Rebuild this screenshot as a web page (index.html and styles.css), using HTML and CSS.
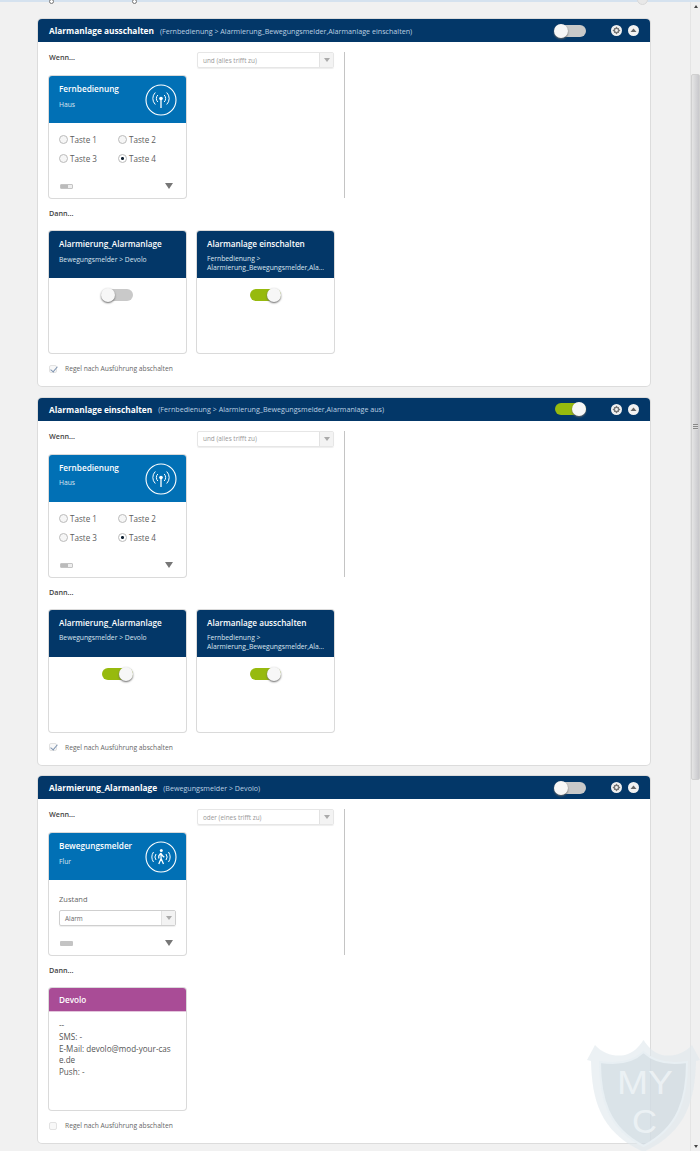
FILE: index.html
```html
<!DOCTYPE html>
<html lang="de">
<head>
  <meta charset="UTF-8">
  <title>Regeln</title>
  <link rel="stylesheet" href="styles.css">
</head>
<body>

<svg class="defs" width="0" height="0">
  <symbol id="i-remote" viewBox="0 0 32 32">
    <circle cx="16" cy="16" r="15" fill="none" stroke="#fff" stroke-width="1.1"/>
    <circle cx="16" cy="14.500" r="1.800" fill="#fff"/>
    <path d="M16 15v9" stroke="#fff" stroke-width="1.300"/>
    <path d="M12.800 18a5 5 0 0 1 0-7M19.200 11a5 5 0 0 1 0 7M10.300 20.500a8.500 8.500 0 0 1 0-12M21.700 8.500a8.500 8.500 0 0 1 0 12" fill="none" stroke="#fff" stroke-width="1"/>
  </symbol>
  <symbol id="i-motion" viewBox="0 0 32 32">
    <circle cx="16" cy="16" r="15" fill="none" stroke="#fff" stroke-width="1.1"/>
    <circle cx="16.300" cy="9.500" r="1.500" fill="#fff"/>
    <path d="M15.800 12l-2 3v2.500M15.800 12l2 3 1.500 1.200M16 12.500l.1 5-2.300 5.500M16.100 17.500l2.400 5.500" fill="none" stroke="#fff" stroke-width="1.300"/>
    <path d="M11 13a5 5 0 0 0 0 6M8.500 11a9 9 0 0 0 0 10M21 13a5 5 0 0 1 0 6M23.500 11a9 9 0 0 1 0 10" fill="none" stroke="#fff" stroke-width="1"/>
  </symbol>
  <symbol id="i-gear" viewBox="0 0 11 11">
    <circle cx="5.500" cy="5.500" r="5.500" fill="#f2f2f2"/>
    <circle cx="5.500" cy="5.500" r="2.200" fill="none" stroke="#777" stroke-width="1.500"/>
    <path d="M5.500 1.800v1.200M5.500 8v1.200M1.800 5.500H3M8 5.500h1.200M2.900 2.900l.8.8M7.300 7.300l.8.8M8.100 2.900l-.8.8M3.700 7.300l-.8.8" stroke="#777" stroke-width="1"/>
  </symbol>
  <symbol id="i-up" viewBox="0 0 11 11">
    <circle cx="5.500" cy="5.500" r="5.500" fill="#f2f2f2"/>
    <path d="M5.500 3.500L8.500 7h-6z" fill="#666"/>
  </symbol>
</svg>

<div class="topstrip">
  <i class="cut-ring ring-a"></i>
  <i class="cut-ring ring-b"></i>
  <i class="cut-ring ring-c"></i>
</div>

<main class="rules">

  <section class="rule">
    <header class="rule-head">
      <h2>Alarmanlage ausschalten</h2>
      <span class="rule-path">(Fernbedienung &gt; Alarmierung_Bewegungsmelder,Alarmanlage einschalten)</span>
      <span class="switch"></span>
      <svg class="head-btn gear"><use href="#i-gear"/></svg>
      <svg class="head-btn"><use href="#i-up"/></svg>
    </header>
    <div class="rule-body">
      <div class="when-row">
        <div class="when-col">
          <div class="label">Wenn...</div>
          <div class="card">
            <div class="card-head blue">
              <div class="card-text">
                <h3>Fernbedienung</h3>
                <p>Haus</p>
              </div>
              <svg class="card-icon"><use href="#i-remote"/></svg>
            </div>
            <div class="card-main radios">
              <span class="radio"><i></i>Taste 1</span>
              <span class="radio"><i></i>Taste 2</span>
              <span class="radio"><i></i>Taste 3</span>
              <span class="radio on"><i></i>Taste 4</span>
            </div>
            <div class="card-foot"><span class="battery low"></span><span class="more"></span></div>
          </div>
        </div>
        <div class="logic-col">
          <div class="select"><span>und (alles trifft zu)</span><b></b></div>
        </div>
      </div>
      <div class="label then">Dann...</div>
      <div class="actions">
        <div class="card">
          <div class="card-head navy">
            <div class="card-text">
              <h3>Alarmierung_Alarmanlage</h3>
              <p>Bewegungsmelder &gt; Devolo</p>
            </div>
          </div>
          <div class="card-switch"><span class="switch"></span></div>
        </div>
        <div class="card">
          <div class="card-head navy">
            <div class="card-text">
              <h3>Alarmanlage einschalten</h3>
              <p class="small">Fernbedienung &gt;<br>Alarmierung_Bewegungsmelder,Ala...</p>
            </div>
          </div>
          <div class="card-switch"><span class="switch on"></span></div>
        </div>
      </div>
      <div class="check on"><i></i>Regel nach Ausführung abschalten</div>
    </div>
  </section>

  <section class="rule">
    <header class="rule-head">
      <h2>Alarmanlage einschalten</h2>
      <span class="rule-path">(Fernbedienung &gt; Alarmierung_Bewegungsmelder,Alarmanlage aus)</span>
      <span class="switch on"></span>
      <svg class="head-btn gear"><use href="#i-gear"/></svg>
      <svg class="head-btn"><use href="#i-up"/></svg>
    </header>
    <div class="rule-body">
      <div class="when-row">
        <div class="when-col">
          <div class="label">Wenn...</div>
          <div class="card">
            <div class="card-head blue">
              <div class="card-text">
                <h3>Fernbedienung</h3>
                <p>Haus</p>
              </div>
              <svg class="card-icon"><use href="#i-remote"/></svg>
            </div>
            <div class="card-main radios">
              <span class="radio"><i></i>Taste 1</span>
              <span class="radio"><i></i>Taste 2</span>
              <span class="radio"><i></i>Taste 3</span>
              <span class="radio on"><i></i>Taste 4</span>
            </div>
            <div class="card-foot"><span class="battery low"></span><span class="more"></span></div>
          </div>
        </div>
        <div class="logic-col">
          <div class="select"><span>und (alles trifft zu)</span><b></b></div>
        </div>
      </div>
      <div class="label then">Dann...</div>
      <div class="actions">
        <div class="card">
          <div class="card-head navy">
            <div class="card-text">
              <h3>Alarmierung_Alarmanlage</h3>
              <p>Bewegungsmelder &gt; Devolo</p>
            </div>
          </div>
          <div class="card-switch"><span class="switch on"></span></div>
        </div>
        <div class="card">
          <div class="card-head navy">
            <div class="card-text">
              <h3>Alarmanlage ausschalten</h3>
              <p class="small">Fernbedienung &gt;<br>Alarmierung_Bewegungsmelder,Ala...</p>
            </div>
          </div>
          <div class="card-switch"><span class="switch on"></span></div>
        </div>
      </div>
      <div class="check on"><i></i>Regel nach Ausführung abschalten</div>
    </div>
  </section>

  <section class="rule">
    <header class="rule-head">
      <h2>Alarmierung_Alarmanlage</h2>
      <span class="rule-path">(Bewegungsmelder &gt; Devolo)</span>
      <span class="switch"></span>
      <svg class="head-btn gear"><use href="#i-gear"/></svg>
      <svg class="head-btn"><use href="#i-up"/></svg>
    </header>
    <div class="rule-body">
      <div class="when-row">
        <div class="when-col">
          <div class="label">Wenn...</div>
          <div class="card">
            <div class="card-head blue">
              <div class="card-text">
                <h3>Bewegungsmelder</h3>
                <p>Flur</p>
              </div>
              <svg class="card-icon"><use href="#i-motion"/></svg>
            </div>
            <div class="card-main state">
              <div class="state-label">Zustand</div>
              <div class="select in-card"><span>Alarm</span><b></b></div>
            </div>
            <div class="card-foot"><span class="battery"></span><span class="more"></span></div>
          </div>
        </div>
        <div class="logic-col">
          <div class="select"><span>oder (eines trifft zu)</span><b></b></div>
        </div>
      </div>
      <div class="label then">Dann...</div>
      <div class="actions">
        <div class="card">
          <div class="card-head purple"><h3>Devolo</h3></div>
          <div class="contact">
            --<br>
            SMS: -<br>
            E-Mail: devolo@mod-your-case.de<br>
            Push: -
          </div>
        </div>
      </div>
      <div class="check"><i></i>Regel nach Ausführung abschalten</div>
    </div>
  </section>

</main>

<aside class="scrollbar">
  <span class="arrow"></span>
  <div class="thumb"><i></i></div>
  <span class="arrow down"></span>
</aside>

<svg class="watermark" viewBox="0 0 113 111">
  <path d="M8 5C16 14 28 17 38 15 46 13 52 7 56.500 0 61 7 67 13 75 15 85 17 97 14 105 5L113 20 109 21C108 60 100 92 56.500 112 13 92 5 60 4 21L0 20z" fill="#dfe8ed" fill-opacity=".6"/>
  <path d="M13 22C26 24 44 24 56.500 12 69 24 87 24 100 22 100 58 92 88 56.500 106 21 88 13 58 13 22z" fill="#ccd7df" fill-opacity=".55" stroke="#e8eff3" stroke-width="2"/>
  <text class="mark" x="30" y="54" textLength="56" lengthAdjust="spacingAndGlyphs">MY</text>
  <text class="mark" x="45" y="93" textLength="25" lengthAdjust="spacingAndGlyphs">C</text>
</svg>

</body>
</html>
```

FILE: styles.css
```css
* {
  box-sizing: border-box;
}
html, body {
  margin: 0;
  height: 1151px;
  overflow: hidden;
}
body {
  background: #f1f1f1;
  font-family: "Open Sans", sans-serif;
  color: #555;
  position: relative;
}
.defs {
  position: absolute;
}

/* top of the window, the rule above is scrolled away */
.topstrip {
  height: 19px;
  border-top: 2px solid #d5e2ef;
  position: relative;
}
.cut-ring {
  position: absolute;
  top: -3px;
  width: 5px;
  height: 5px;
  border: 1px solid #777;
  border-radius: 50%;
  background: #fff;
}
.ring-a { left: 49px; }
.ring-b { left: 132px; }
.ring-c {
  left: 637px;
  top: -8px;
  width: 11px;
  height: 11px;
  border-color: #d8d8d8;
  background: #e8e8e8;
}

.rules {
  width: 612px;
  margin-left: 38px;
  display: flex;
  flex-direction: column;
  gap: 11.500px;
}
.rule {
  height: 367px;
  display: flex;
  flex-direction: column;
  background: #fff;
  border-radius: 4px;
  box-shadow: 0 0 0 1px #dcdcdc;
}
.rule-head {
  height: 23px;
  flex: none;
  display: flex;
  align-items: center;
  padding: 0 11px;
  background: #033768;
  border-radius: 4px 4px 0 0;
  color: #fff;
}
.rule-head h2 {
  margin: 0;
  font-size: 8.300px;
  font-weight: 700;
  white-space: nowrap;
}
.rule-path {
  margin-left: 6px;
  font-size: 7.150px;
  color: #bcd0e2;
  white-space: nowrap;
}
.rule-head .switch {
  margin-left: auto;
}
.head-btn {
  width: 11px;
  height: 11px;
  margin-left: 6px;
}
.head-btn.gear {
  margin-left: 25px;
}

.rule-body {
  flex: 1;
  padding: 10px 10px 0 11px;
}
.when-row {
  display: flex;
  height: 146px;
}
.when-col {
  width: 137px;
  display: flex;
  flex-direction: column;
}
.logic-col {
  width: 148px;
  margin-left: 11px;
  padding-right: 10px;
  border-right: 1px solid #c4c4c4;
}
.label {
  height: 24px;
  font-size: 7.200px;
  font-weight: 600;
  color: #444;
}
.label.then {
  height: 23px;
  margin-top: 10px;
}

.select {
  height: 16px;
  display: flex;
  align-items: center;
  border: 1px solid #e6e6e6;
  border-radius: 2px;
  font-size: 6.400px;
  color: #999;
  box-shadow: 0 1px 1px #eee;
}
.select span {
  flex: 1;
  padding-left: 5px;
}
.select b {
  width: 14px;
  height: 100%;
  flex: none;
  position: relative;
  border-left: 1px solid #e2e2e2;
  background: #f3f3f3;
}
.select b::after {
  content: "";
  position: absolute;
  left: 4px;
  top: 5px;
  border: 3px solid transparent;
  border-top: 4px solid #aaa;
  border-bottom: 0;
}
.select.in-card {
  color: #666;
  border-color: #cfcfcf;
}

.card {
  width: 137px;
  height: 122px;
  flex: none;
  display: flex;
  flex-direction: column;
  background: #fff;
  border-radius: 3px;
  box-shadow: 0 0 0 1px #dadada;
}
.card-head {
  height: 47px;
  flex: none;
  display: flex;
  justify-content: space-between;
  padding: 7px 10px;
  border-radius: 3px 3px 0 0;
  color: #fff;
}
.card-head.blue { background: #0170b5; }
.card-head.navy { background: #033768; }
.card-head.purple {
  height: 24px;
  align-items: center;
  padding: 0 10px;
  background: #a94c96;
  border-bottom: 1px solid #e3c5dc;
}
.card-head h3 {
  margin: 0;
  font-size: 8.200px;
  font-weight: 600;
  white-space: nowrap;
}
.card-head p {
  margin: 5.500px 0 0;
  font-size: 6.750px;
  line-height: 9px;
  white-space: nowrap;
  color: #dbe6ef;
}
.card-head p.small {
  margin-top: 5px;
}
.card-icon {
  width: 32px;
  height: 32px;
  flex: none;
  margin-top: 1px;
  margin-right: -0.500px;
}

.card-main {
  flex: 1;
  padding: 0 10px;
}
.radios {
  display: grid;
  grid-template-columns: 59px 1fr;
  grid-auto-rows: 19px;
  padding-top: 7px;
}
.radio {
  display: flex;
  align-items: center;
  font-size: 8.100px;
  color: #5c5c5c;
}
.radio i {
  width: 9px;
  height: 9px;
  margin-right: 2px;
  flex: none;
  border: 1px solid #bbb;
  border-radius: 50%;
  background: #f6f6f6;
}
.radio.on i {
  background: radial-gradient(circle, #123 0 1.200px, #fff 1.800px);
}
.state {
  padding-top: 14px;
}
.state-label {
  font-size: 7.500px;
  color: #666;
  margin-bottom: 6px;
}
.card-foot {
  height: 22px;
  flex: none;
  display: flex;
  justify-content: space-between;
  align-items: flex-start;
  padding: 7px 13px 0 11px;
}
.battery {
  width: 13px;
  height: 5px;
  margin-top: 1px;
  border-radius: 1px;
  background: #c4c4c4;
}
.battery.low {
  background: linear-gradient(90deg, #bbb 0 60%, #eee 60%);
  border: 1px solid #c4c4c4;
}
.more {
  border: 4.500px solid transparent;
  border-top: 6px solid #777;
  border-bottom: 0;
}

.switch {
  width: 31px;
  height: 12px;
  flex: none;
  display: block;
  position: relative;
  border-radius: 6px;
  background: #c9c9c9;
}
.switch::after {
  content: "";
  position: absolute;
  left: -1px;
  top: -1px;
  width: 14px;
  height: 14px;
  border-radius: 50%;
  background: #f7f7f7;
  box-shadow: 0 1px 2px #666;
}
.switch.on {
  background: #97ba0e;
}
.switch.on::after {
  left: auto;
  right: 0;
}
.card-switch {
  display: flex;
  justify-content: center;
  padding-top: 11px;
}

.actions {
  display: flex;
  gap: 11px;
}
.contact {
  padding: 7px 10px;
  font-size: 8.100px;
  line-height: 11.800px;
  color: #555;
  word-break: break-all;
}
.check {
  display: flex;
  align-items: center;
  margin-top: 11px;
  font-size: 6.700px;
  color: #666;
}
.check i {
  width: 8px;
  height: 8px;
  margin-right: 8px;
  border: 1px solid #e2e2e2;
  border-radius: 2px;
  background: #f8f8f8;
  position: relative;
}
.check.on i::after {
  content: "";
  position: absolute;
  left: 2px;
  top: -1px;
  width: 3px;
  height: 6px;
  border: solid #7d93b0;
  border-width: 0 1px 1px 0;
  transform: rotate(40deg);
}

.scrollbar {
  position: absolute;
  top: 2px;
  right: 0;
  bottom: 0;
  width: 10px;
  display: flex;
  flex-direction: column;
  background: #f0f0f0;
  border-left: 1px solid #e4e4e4;
}
.arrow {
  margin: 3px auto;
  border: 2px solid transparent;
  border-bottom: 3px solid #444;
  border-top: 0;
}
.arrow.down {
  margin-top: auto;
  border-bottom: 0;
  border-top: 3px solid #444;
}
.thumb {
  height: 706px;
  margin-top: 63px;
  display: flex;
  align-items: center;
  justify-content: center;
  background: linear-gradient(90deg, #e5e5e5, #c8c8cc);
  border: 1px solid #d0d0d0;
  border-radius: 2px;
}
.thumb i {
  width: 5px;
  height: 6px;
  background: repeating-linear-gradient(#888 0 1px, #ddd 1px 2px);
}

.watermark {
  position: absolute;
  left: 587px;
  top: 1040px;
  width: 113px;
  height: 111px;
  pointer-events: none;
}
.mark {
  font-family: "Liberation Sans", sans-serif;
  font-size: 34px;
  fill: #eef3f6;
  fill-opacity: .9;
}
```
